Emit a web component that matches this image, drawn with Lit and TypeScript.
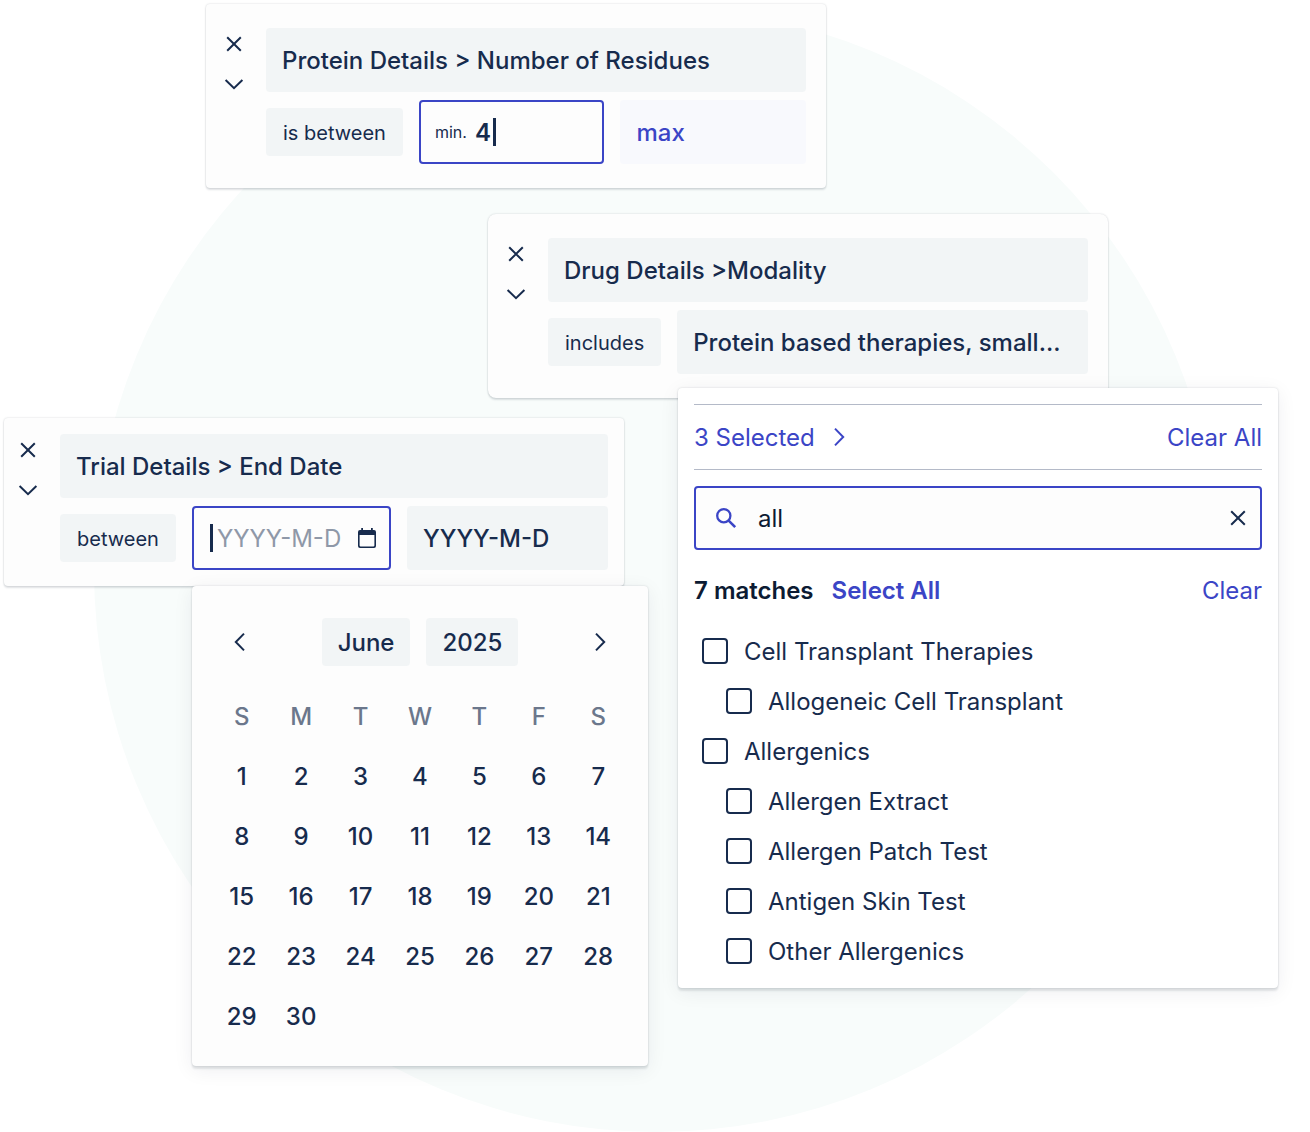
import { LitElement, html, css, svg } from "lit";
import { customElement, property } from "lit/decorators.js";

const base = css`
  *,
  *::before,
  *::after {
    box-sizing: border-box;
  }
  button,
  input {
    margin: 0;
    padding: 2px 0 0;
    border: 0;
    background: none;
    color: inherit;
    font: inherit;
    outline: none;
  }
  button {
    cursor: pointer;
  }
  svg {
    display: block;
    fill: none;
    stroke: currentColor;
    stroke-width: 2;
  }
  .icon-button {
    display: grid;
    place-items: center;
    width: 24px;
    height: 24px;
    padding: 0;
  }
  .caret {
    width: 3px;
    height: 28px;
    background: var(--ink);
  }
`;

const paths = {
  close: svg`<path d="M5.2 5.2 18.8 18.8M18.8 5.2 5.2 18.8" />`,
  down: svg`<path d="M3.6 8 12 16.2 20.4 8" />`,
  left: svg`<path d="M16 3.6 7.8 12 16 20.4" />`,
  right: svg`<path d="M8 3.6 16.2 12 8 20.4" />`,
  search: svg`<circle cx="9.8" cy="9.7" r="6.6" stroke-width="2.3" /><path d="M14.4 14.4 21.2 21.2" stroke-width="2.6" />`,
  calendar: svg`<path fill="currentColor" fill-rule="evenodd" stroke="none" d="M6.2 2h1.8v2h8V2h1.8v2h1.2a2 2 0 0 1 2 2v14a2 2 0 0 1-2 2H5a2 2 0 0 1-2-2V6a2 2 0 0 1 2-2h1.2zM4.6 9v10.6a.8.8 0 0 0 .8.8h13.2a.8.8 0 0 0 .8-.8V9z" />`,
};

const icon = (name: keyof typeof paths) =>
  html`<svg width="24" height="24" viewBox="0 0 24 24" aria-hidden="true">${paths[name]}</svg>`;

@customElement("filter-card")
class FilterCard extends LitElement {
  @property() heading = "";
  @property() operator = "";

  static styles = [
    base,
    css`
      :host {
        display: flex;
        gap: 20px;
        position: relative;
        padding: 24px 20px 24px 16px;
        border-radius: 4px;
        background: var(--card);
        box-shadow: 0 0 2px rgba(20, 35, 50, 0.2), 0 2px 2px rgba(20, 35, 50, 0.12);
      }
      :host([rounded]) {
        border-radius: 8px;
      }
      :host([compact]) {
        padding: 16px 16px 16px 12px;
      }
      .tools {
        display: flex;
        flex-direction: column;
        gap: 16px;
        padding-top: 4px;
      }
      .body {
        display: flex;
        flex-direction: column;
        flex: 1;
        gap: 8px;
        min-width: 0;
      }
      .heading {
        height: 64px;
        padding: 2px 16px 0;
        border-radius: 4px;
        background: var(--chip);
        font-weight: 500;
        text-align: left;
        white-space: nowrap;
      }
      .row {
        display: flex;
        align-items: center;
        gap: 16px;
      }
      .operator {
        height: 48px;
        padding: 2px 17px 0;
        border-radius: 4px;
        background: var(--chip);
        font-size: 20px;
        white-space: nowrap;
      }
    `,
  ];

  render() {
    return html`
      <div class="tools">
        <button class="icon-button" aria-label="Remove filter">${icon("close")}</button>
        <button class="icon-button" aria-label="Collapse filter">${icon("down")}</button>
      </div>
      <div class="body">
        <button class="heading">${this.heading}</button>
        <div class="row">
          <button class="operator">${this.operator}</button>
          <slot></slot>
        </div>
      </div>
      <slot name="popup"></slot>
    `;
  }
}

@customElement("date-picker")
class DatePicker extends LitElement {
  static styles = [
    base,
    css`
      :host {
        display: block;
        padding: 32px 20px 20px;
        border-radius: 4px;
        background: var(--card);
        box-shadow: var(--popup-shadow);
        font-weight: 500;
      }
      .nav {
        display: flex;
        align-items: center;
        justify-content: space-between;
        padding: 0 16px;
        margin-bottom: 20px;
      }
      .period {
        display: flex;
        gap: 16px;
      }
      .chip {
        height: 48px;
        padding: 2px 16px 0;
        border-radius: 4px;
        background: var(--chip);
      }
      .days {
        width: 100%;
        table-layout: fixed;
        border-collapse: collapse;
      }
      .days th,
      .days td {
        height: 60px;
        padding: 0;
        text-align: center;
      }
      .days th {
        padding-top: 2px;
        color: var(--muted);
        font-weight: 500;
      }
      .day {
        width: 100%;
        height: 60px;
        display: block;
      }
    `,
  ];

  render() {
    const weeks = [0, 1, 2, 3, 4].map((w) =>
      [1, 2, 3, 4, 5, 6, 7].map((d) => w * 7 + d)
    );
    return html`
      <div class="nav">
        <button class="icon-button" aria-label="Previous month">${icon("left")}</button>
        <div class="period">
          <button class="chip">June</button>
          <button class="chip">2025</button>
        </div>
        <button class="icon-button" aria-label="Next month">${icon("right")}</button>
      </div>
      <table class="days">
        <thead>
          <tr>
            ${["S", "M", "T", "W", "T", "F", "S"].map((d) => html`<th scope="col">${d}</th>`)}
          </tr>
        </thead>
        <tbody>
          ${weeks.map(
            (week) => html`<tr>
              ${week.map(
                (day) =>
                  html`<td>${day <= 30 ? html`<button class="day">${day}</button>` : ""}</td>`
              )}
            </tr>`
          )}
        </tbody>
      </table>
    `;
  }
}

const options = [
  { label: "Cell Transplant Therapies", child: false },
  { label: "Allogeneic Cell Transplant", child: true },
  { label: "Allergenics", child: false },
  { label: "Allergen Extract", child: true },
  { label: "Allergen Patch Test", child: true },
  { label: "Antigen Skin Test", child: true },
  { label: "Other Allergenics", child: true },
];

@customElement("option-picker")
class OptionPicker extends LitElement {
  static styles = [
    base,
    css`
      :host {
        display: block;
        padding: 16px 16px 12px;
        border-radius: 4px;
        background: #fff;
        box-shadow: var(--popup-shadow);
      }
      .selected {
        display: flex;
        align-items: center;
        justify-content: space-between;
        height: 66px;
        margin-bottom: 16px;
        border-top: 1px solid #b4bac8;
        border-bottom: 1px solid #b4bac8;
        color: var(--accent);
      }
      .count {
        display: flex;
        align-items: center;
        gap: 12px;
        padding: 0;
      }
      .search {
        display: flex;
        align-items: center;
        height: 64px;
        padding: 0 10px 0 18px;
        border: 2px solid var(--accent);
        border-radius: 4px;
        background: var(--card);
        color: var(--deep);
      }
      .glass {
        color: var(--accent);
      }
      .query {
        flex: 1;
        min-width: 0;
        margin-left: 20px;
      }
      .clear-query {
        color: var(--ink);
      }
      .matches {
        display: flex;
        align-items: center;
        gap: 18px;
        height: 72px;
        margin-top: 4px;
        color: var(--deep);
        font-weight: 600;
      }
      .label {
        padding-top: 2px;
      }
      .link {
        color: var(--accent);
      }
      .clear {
        margin-left: auto;
        font-weight: 400;
      }
      .list {
        margin: 0;
        padding: 0 0 0 8px;
        list-style: none;
      }
      .child {
        padding-left: 24px;
      }
      .option {
        display: flex;
        align-items: center;
        gap: 16px;
        height: 50px;
      }
      .box {
        appearance: none;
        width: 26px;
        height: 26px;
        border: 2px solid var(--ink);
        border-radius: 4px;
      }
      .box:checked {
        background: var(--accent);
      }
    `,
  ];

  render() {
    return html`
      <div class="selected">
        <button class="count"><span class="label">3 Selected</span>${icon("right")}</button>
        <button>Clear All</button>
      </div>
      <div class="search">
        <span class="glass">${icon("search")}</span>
        <input class="query" type="text" aria-label="Search options" value="all" />
        <button class="icon-button clear-query" aria-label="Clear search">${icon("close")}</button>
      </div>
      <div class="matches">
        <span class="label">7 matches</span>
        <button class="link">Select All</button>
        <button class="link clear">Clear</button>
      </div>
      <ul class="list">
        ${options.map(
          (o) => html`<li class=${o.child ? "child" : ""}>
            <label class="option"
              ><input class="box" type="checkbox" /><span class="label">${o.label}</span></label
            >
          </li>`
        )}
      </ul>
    `;
  }
}

@customElement("app-root")
class AppRoot extends LitElement {
  static styles = [
    base,
    css`
      :host {
        --ink: #172b4d;
        --deep: #0c1b33;
        --accent: #3b45c6;
        --muted: #6b778c;
        --chip: #f2f5f6;
        --card: #fdfdfd;
        --popup-shadow: 0 0 2px rgba(20, 35, 50, 0.18), 0 3px 2px rgba(20, 35, 50, 0.1),
          0 4px 20px rgba(20, 35, 50, 0.07);
        display: block;
        background: #fff;
        color: var(--ink);
        font: 400 24px/32px Inter, "Liberation Sans", sans-serif;
      }
      .stage {
        display: grid;
        grid-template-columns: 4fr 202fr 282fr 136fr 202fr 282fr 202fr;
        align-content: start;
        position: relative;
        isolation: isolate;
        overflow: hidden;
        min-height: 100vh;
        padding-top: 4px;
      }
      .disc {
        position: absolute;
        z-index: -1;
        top: 8px;
        left: 50%;
        width: 1124px;
        height: 1124px;
        margin-left: -561px;
        border-radius: 50%;
        background: #f8fcfb;
      }
      .residues {
        grid-column: 3 / 6;
      }
      .modality {
        grid-column: 4 / 7;
        margin-top: 26px;
      }
      .end-date {
        grid-column: 2 / 5;
        margin-top: 20px;
      }
      .field {
        display: flex;
        align-items: center;
        flex: 1;
        min-width: 0;
        height: 64px;
        padding: 0 16px;
        border-radius: 4px;
        background: var(--chip);
        font-weight: 500;
        text-align: left;
        white-space: nowrap;
      }
      .summary {
        padding-top: 2px;
      }
      .active {
        padding: 0 14px;
        border: 2px solid var(--accent);
        background: var(--card);
      }
      .field ::placeholder {
        color: inherit;
        opacity: 1;
      }
      .text {
        flex: 1;
        width: 0;
        min-width: 0;
      }
      .hint {
        margin-right: 8px;
        font-size: 16px;
        font-weight: 400;
      }
      .number {
        field-sizing: content;
        font-weight: 600;
        margin-right: 2px;
      }
      .max {
        background: #f8f9fd;
        color: var(--accent);
      }
      .date {
        padding-left: 16px;
        padding-right: 10px;
      }
      .date .text {
        margin-left: 4px;
        color: #8f98a8;
        font-weight: 400;
      }
      .calendar {
        position: absolute;
        top: 168px;
        left: 188px;
        width: 456px;
      }
      .picker {
        position: absolute;
        top: 174px;
        left: 190px;
        width: 600px;
      }
    `,
  ];

  render() {
    return html`
      <main class="stage">
        <div class="disc"></div>
        <filter-card
          class="residues"
          heading="Protein Details > Number of Residues"
          operator="is between"
        >
          <label class="field active">
            <span class="hint">min.</span>
            <input class="number" type="text" inputmode="numeric" value="4" />
            <span class="caret"></span>
          </label>
          <label class="field max">
            <input class="text" type="text" inputmode="numeric" aria-label="Maximum" placeholder="max" />
          </label>
        </filter-card>

        <filter-card class="modality" rounded heading="Drug Details >Modality" operator="includes">
          <button class="field summary">Protein based therapies, small...</button>
          <option-picker class="picker" slot="popup"></option-picker>
        </filter-card>

        <filter-card class="end-date" compact heading="Trial Details > End Date" operator="between">
          <label class="field active date">
            <span class="caret"></span>
            <input class="text" type="text" aria-label="Start date" placeholder="YYYY-M-D" />
            <button class="icon-button" aria-label="Open calendar">${icon("calendar")}</button>
          </label>
          <label class="field">
            <input class="text" type="text" aria-label="End date" placeholder="YYYY-M-D" />
          </label>
          <date-picker class="calendar" slot="popup"></date-picker>
        </filter-card>
      </main>
    `;
  }
}
